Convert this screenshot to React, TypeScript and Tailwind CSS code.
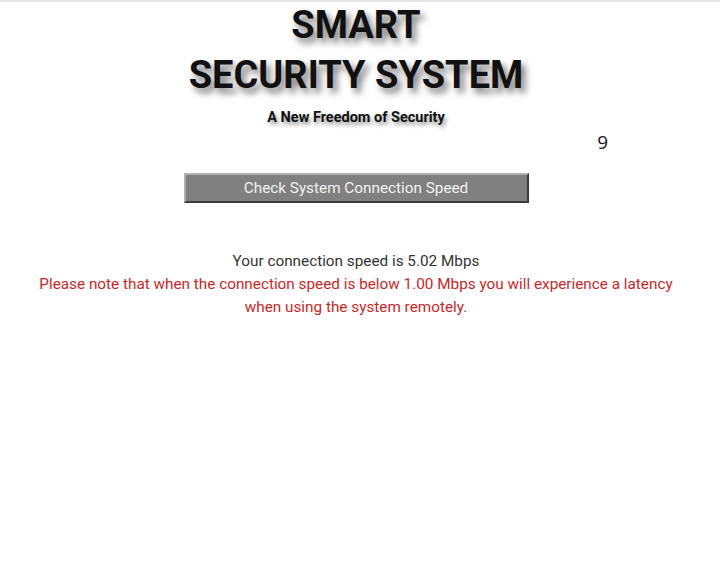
export default function App() {
    return (
        <div className="min-h-[564px] bg-white border-t-2 border-[#e4e4e4] pr-[8px] font-['Roboto',sans-serif]">
            <h1 className="-mt-[2px] text-center text-[38px] font-bold leading-[50px] text-[#111] [text-shadow:4px_5px_7px_rgba(0,0,0,0.55)]">
                SMART
                <br />
                SECURITY SYSTEM
            </h1>
            <p className="mt-[8px] text-center text-[14.5px] font-bold leading-[20px] text-[#111] [text-shadow:2px_3px_4px_rgba(0,0,0,0.45)]">
                A New Freedom of Security
            </p>
            <div className="mt-[2px] flex justify-end pr-[104px] font-['Open_Sans',sans-serif] text-[19px] leading-[24px] text-[#14142b]">
                9
            </div>
            <div className="mt-[19px] flex justify-center">
                <button className="h-[30px] w-[345px] border-2 border-t-[#b0b0b0] border-l-[#b0b0b0] border-b-[#3a3a3a] border-r-[#3a3a3a] bg-[#808080] text-[15.3px] text-[#f2f2f2]">
                    Check System Connection Speed
                </button>
            </div>
            <div className="mt-[47px] text-center text-[15.3px] leading-[23px]">
                <p className="text-[#333]">Your connection speed is 5.02 Mbps</p>
                <p className="mx-auto max-w-[660px] text-[#c62828]">
                    Please note that when the connection speed is below 1.00 Mbps you will experience a latency when using the system remotely.
                </p>
            </div>
        </div>
    )
}
